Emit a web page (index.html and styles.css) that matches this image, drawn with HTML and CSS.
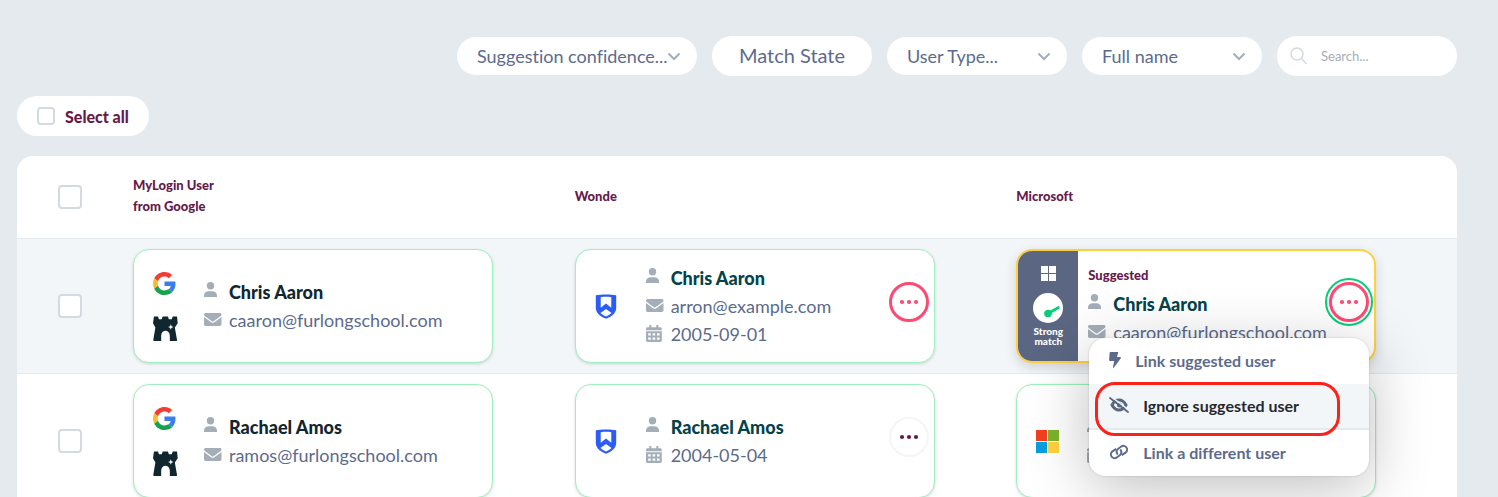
FILE: index.html
```html
<!DOCTYPE html>
<html lang="en">

<head>
    <meta charset="UTF-8">
    <title>Match users</title>
    <link rel="stylesheet" href="styles.css">
</head>

<body>
    <!-- shared icons -->
    <svg class="sprite" aria-hidden="true">
        <symbol id="chevron" viewBox="0 0 14 9"><path d="M1.500 1.500 7 7l5.500-5.500" fill="none" stroke="currentColor" stroke-width="2"/></symbol>
        <symbol id="user" viewBox="0 0 18 20"><circle cx="6.500" cy="3.700" r="3.700"/><path d="M0 15v-1.300C0 10.800 2 9.200 4.600 9.200h3.800c2.600 0 4.600 1.600 4.600 4.500V15z"/></symbol>
        <symbol id="mail" viewBox="0 0 18 20"><path d="M1.700 3h14.100c1 0 1.700.7 1.700 1.600 0 .6-.3 1-.7 1.300l-7.300 5.400c-.5.400-1.100.4-1.600 0L.7 5.900C.3 5.600 0 5.200 0 4.600 0 3.700.7 3 1.700 3z"/><path d="M0 7l7.100 5.300c1 .7 2.300.7 3.300 0L17.500 7v7.300c0 1-.8 1.700-1.700 1.700H1.700c-1 0-1.700-.7-1.700-1.700z"/></symbol>
        <symbol id="calendar" viewBox="0 0 18 20"><path d="M3.300 1h2v2.200h5V1h2v2.200h1.900c.9 0 1.600.7 1.600 1.500v1.500H0V4.700c0-.8.700-1.500 1.600-1.500h1.700z"/><path fill-rule="evenodd" d="M0 7.300h15.800v9c0 1-.7 1.700-1.600 1.700H1.600C.7 18 0 17.300 0 16.300zm2.200 1.900v2.300h2.600V9.200zm4.400 0v2.300h2.600V9.200zm4.400 0v2.300h2.600V9.200zM2.200 13.500v2.300h2.600v-2.300zm4.400 0v2.300h2.600v-2.300zm4.400 0v2.300h2.600v-2.300z"/></symbol>
        <symbol id="google" viewBox="0 0 48 48">
            <path fill="#f33d34" d="M24 9.500c3.540 0 6.710 1.220 9.210 3.600l6.850-6.850C35.900 2.380 30.470 0 24 0 14.620 0 6.510 5.380 2.560 13.220l7.980 6.190C12.430 13.720 17.740 9.500 24 9.500z"/>
            <path fill="#3b7ded" d="M46.980 24.550c0-1.570-.15-3.090-.38-4.550H24v9.020h12.940c-.58 2.960-2.260 5.480-4.780 7.180l7.730 6c4.510-4.180 7.090-10.360 7.090-17.650z"/>
            <path fill="#fbb92c" d="M10.530 28.590c-.48-1.450-.76-2.990-.76-4.590s.27-3.140.76-4.590l-7.980-6.190C.92 16.460 0 20.120 0 24c0 3.880.92 7.540 2.560 10.780l7.970-6.190z"/>
            <path fill="#16a34f" d="M24 48c6.480 0 11.930-2.130 15.890-5.810l-7.730-6c-2.150 1.450-4.920 2.300-8.160 2.300-6.260 0-11.570-4.220-13.470-9.910l-7.980 6.190C6.510 42.620 14.620 48 24 48z"/>
        </symbol>
        <symbol id="castle" viewBox="0 0 26 26">
            <path fill="#10272f" d="M1 .5h4.200l1 3h3L10 .5h5.500l1 3h3l1-3H25l.7 7-3 4.500L25 25c0 .6-.3 1-1 1h-6.500v-5.500c0-7-9-7-9 0V26H1.300c-.8 0-1.200-.4-1-1.200L2.500 12 0 7.500z"/>
            <path fill="#fff" d="M18.500 8.500l.8 2.100 2.100.8-2.100.8-.8 2.100-.8-2.100-2.100-.8 2.100-.8z"/>
        </symbol>
        <symbol id="shield" viewBox="0 0 22 26">
            <path fill="#2b5cf6" d="M11 .4c4 0 7.500.3 10.600 1V14c0 5.600-4 9-10.600 11.700C4.400 23 .4 19.600.4 14V1.400C3.500.7 7 .4 11 .4z"/>
            <path fill="#fff" d="M5.500 3.300c3.700-.6 7.300-.6 11 0v11L11 10l-5.500 4.300zM11 15.500l5.800 4.200C15 21.400 13.200 22.400 11 23.300c-2.200-.9-4-1.900-5.800-3.600z"/>
        </symbol>
        <symbol id="eye-off" viewBox="0 0 20 16">
            <path fill="none" stroke="currentColor" stroke-width="3" d="M3 8c2-3.700 4.200-5 7-5s5 1.300 7 5c-2 3.700-4.200 5-7 5S5 11.700 3 8z"/>
            <circle cx="10.500" cy="8" r="2.500"/>
            <path stroke="#f3f6f9" stroke-width="1.500" d="M2.500 0l18 13.500"/>
            <path stroke="currentColor" stroke-width="1.800" stroke-linecap="round" d="M1 1l18 14"/>
        </symbol>
        <symbol id="link" viewBox="0 0 20 16">
            <g fill="none" stroke="currentColor" stroke-width="2">
                <path d="M7.200 4.900 3.500 7.400a3.700 3.700 0 0 0 4.200 6.100l3.100-2.200a3.700 3.700 0 0 0 .9-5.200l-.5-.6"/>
                <path d="M12.800 11.100l3.700-2.500a3.700 3.700 0 0 0-4.200-6.100L9.200 4.700a3.700 3.700 0 0 0-.9 5.200l.5.600"/>
            </g>
        </symbol>
        <symbol id="dots" viewBox="0 0 20 6"><circle cx="3" cy="3" r="2.100"/><circle cx="10" cy="3" r="2.100"/><circle cx="17" cy="3" r="2.100"/></symbol>
    </svg>

    <div class="page">
        <form class="filters">
            <div class="select wide">
                <select aria-label="Suggestion confidence"><option>Suggestion confidence...</option></select>
                <svg><use href="#chevron"/></svg>
            </div>
            <button type="button" class="match-state">Match State</button>
            <div class="select">
                <select aria-label="User type"><option>User Type...</option></select>
                <svg><use href="#chevron"/></svg>
            </div>
            <div class="select">
                <select aria-label="Sort by"><option>Full name</option></select>
                <svg><use href="#chevron"/></svg>
            </div>
            <div class="search">
                <svg viewBox="0 0 18 18"><circle cx="7" cy="7" r="6" fill="none" stroke="#d3dae2" stroke-width="1.500"/><path d="M11.500 11.500l5 5.500" stroke="#d3dae2" stroke-width="1.500"/></svg>
                <input type="text" placeholder="Search..." aria-label="Search">
            </div>
        </form>

        <label class="select-all"><input type="checkbox"> Select all</label>

        <table class="users">
            <thead>
                <tr>
                    <th class="check"><input type="checkbox" aria-label="Select all rows"></th>
                    <th>MyLogin User<br>from Google</th>
                    <th>Wonde</th>
                    <th>Microsoft</th>
                </tr>
            </thead>
            <tbody>
                <tr class="current">
                    <td class="check"><input type="checkbox" aria-label="Select Chris Aaron"></td>
                    <td>
                        <div class="card">
                            <div class="source">
                                <svg class="google"><use href="#google"/></svg>
                                <svg class="castle"><use href="#castle"/></svg>
                            </div>
                            <ul class="details main">
                                <li class="name"><svg><use href="#user"/></svg>Chris Aaron</li>
                                <li><svg><use href="#mail"/></svg>caaron@furlongschool.com</li>
                            </ul>
                        </div>
                    </td>
                    <td>
                        <div class="card">
                            <div class="source"><svg class="shield"><use href="#shield"/></svg></div>
                            <ul class="details">
                                <li class="name"><svg><use href="#user"/></svg>Chris Aaron</li>
                                <li><svg><use href="#mail"/></svg>arron@example.com</li>
                                <li><svg><use href="#calendar"/></svg>2005-09-01</li>
                            </ul>
                            <button type="button" class="more pink" aria-label="More"><svg><use href="#dots"/></svg></button>
                        </div>
                    </td>
                    <td>
                        <div class="card suggested">
                            <div class="strength">
                                <svg class="windows" viewBox="0 0 15 15"><path fill="#fff" d="M0 0h7v7H0zM8 0h7v7H8zM0 8h7v7H0zM8 8h7v7H8z"/></svg>
                                <svg class="dial" viewBox="0 0 30 30"><circle cx="15" cy="15" r="15" fill="#fff"/><circle cx="15" cy="20.500" r="3.800" fill="#05ce78"/><path d="M15 20.500l10.500-6" stroke="#05ce78" stroke-width="2.600" stroke-linecap="round"/></svg>
                                <span>Strong match</span>
                            </div>
                            <div>
                                <div class="tag">Suggested</div>
                                <ul class="details">
                                    <li class="name"><svg><use href="#user"/></svg>Chris Aaron</li>
                                    <li><svg><use href="#mail"/></svg>caaron@furlongschool.com</li>
                                </ul>
                            </div>
                            <button type="button" class="more pink open" aria-label="More"><svg><use href="#dots"/></svg></button>
                            <div class="menu">
                                <button type="button"><svg class="bolt" viewBox="0 0 12 16"><path d="M1.500 0h7.800L8 5h3.200c.7 0 1 .7.6 1.200L5 15.500c-.4.700-1.200.4-1-.4L5.200 9H1C.4 9 0 8.600.1 8L.6.800C.7.300 1 0 1.500 0z"/></svg>Link suggested user</button>
                                <button type="button" class="active"><svg><use href="#eye-off"/></svg>Ignore suggested user</button>
                                <button type="button"><svg><use href="#link"/></svg>Link a different user</button>
                            </div>
                        </div>
                    </td>
                </tr>
                <tr>
                    <td class="check"><input type="checkbox" aria-label="Select Rachael Amos"></td>
                    <td>
                        <div class="card">
                            <div class="source">
                                <svg class="google"><use href="#google"/></svg>
                                <svg class="castle"><use href="#castle"/></svg>
                            </div>
                            <ul class="details main">
                                <li class="name"><svg><use href="#user"/></svg>Rachael Amos</li>
                                <li><svg><use href="#mail"/></svg>ramos@furlongschool.com</li>
                            </ul>
                        </div>
                    </td>
                    <td>
                        <div class="card">
                            <div class="source"><svg class="shield"><use href="#shield"/></svg></div>
                            <ul class="details">
                                <li class="name"><svg><use href="#user"/></svg>Rachael Amos</li>
                                <li><svg><use href="#calendar"/></svg>2004-05-04</li>
                            </ul>
                            <button type="button" class="more" aria-label="More"><svg><use href="#dots"/></svg></button>
                        </div>
                    </td>
                    <td>
                        <div class="card">
                            <div class="source">
                                <svg class="microsoft" viewBox="0 0 23 23"><path fill="#f1401f" d="M0 0h11v11H0z"/><path fill="#7cb32b" d="M12 0h11v11H12z"/><path fill="#049fe0" d="M0 12h11v11H0z"/><path fill="#ffd23f" d="M12 12h11v11H12z"/></svg>
                            </div>
                            <ul class="details">
                                <li class="name"><svg><use href="#user"/></svg></li>
                                <li><svg><use href="#calendar"/></svg></li>
                            </ul>
                        </div>
                    </td>
                </tr>
            </tbody>
        </table>
    </div>
</body>

</html>
```

FILE: styles.css
```css
*,
*::after {
    box-sizing: border-box;
}

body {
    margin: 0;
    background: #e5eaee;
    color: #5c6b8c;
    font-family: Lato, "Liberation Sans", sans-serif;
    font-size: 18px;
    font-variant-ligatures: none;
}

button,
input,
select {
    font: inherit;
    font-variant-ligatures: none;
    color: inherit;
    margin: 0;
}

button {
    border: 0;
    padding: 0;
    background: none;
    cursor: pointer;
}

svg {
    display: block;
    flex: none;
    fill: currentColor;
}

.sprite {
    position: absolute;
    width: 0;
    height: 0;
}

.page {
    padding: 36px 41px 0 17px;
}

/* filters */
.filters {
    display: flex;
    justify-content: flex-end;
    align-items: center;
    gap: 15px;
}

.select {
    position: relative;
    width: 180px;
}

.select.wide {
    width: 240px;
}

.select select {
    display: block;
    width: 100%;
    height: 38px;
    padding: 0 20px;
    border: 0;
    border-radius: 19px;
    background: #fff;
    -webkit-appearance: none;
    appearance: none;
}

.select svg {
    position: absolute;
    top: 15px;
    right: 16px;
    width: 14px;
    height: 9px;
    color: #a3aeb8;
    pointer-events: none;
}

.match-state {
    width: 160px;
    height: 40px;
    padding-bottom: 2px;
    border-radius: 20px;
    background: #fff;
    font-size: 20px;
}

.search {
    display: flex;
    align-items: center;
    gap: 13px;
    width: 180px;
    height: 40px;
    padding: 0 13px;
    border-radius: 20px;
    background: #fff;
}

.search svg {
    width: 18px;
    height: 18px;
}

.search input {
    width: 100%;
    border: 0;
    padding: 0;
    outline: 0;
    background: none;
    font-size: 13px;
}

.search input::placeholder {
    color: #a3aeb8;
}

/* check boxes */
input[type="checkbox"] {
    display: block;
    width: 24px;
    height: 24px;
    border: 2px solid #d3dae2;
    border-radius: 4px;
    background: #fff;
    -webkit-appearance: none;
    appearance: none;
}

.select-all {
    display: inline-flex;
    align-items: center;
    gap: 10px;
    height: 40px;
    margin: 20px 0;
    padding: 0 20px;
    border-radius: 20px;
    background: #fff;
    color: #651a4b;
    font-size: 16px;
    font-weight: 900;
}

.select-all input[type="checkbox"] {
    width: 18px;
    height: 18px;
}

/* table */
.users {
    width: 100%;
    table-layout: fixed;
    border-spacing: 0;
    border-radius: 16px 16px 0 0;
    background: #fff;
}

.users th {
    height: 82px;
    padding: 0 1px 2px;
    color: #651a4b;
    font-size: 13px;
    font-weight: 900;
    line-height: 21px;
    text-align: left;
}

.users td {
    padding: 10px 1px;
    border-top: 1px solid #e5eaee;
}

.users .check {
    width: 115px;
    padding-bottom: 0;
    padding-top: 0;
    padding-left: 41px;
}

.current td {
    background: #f3f6f9;
}

/* user cards */
.card {
    display: flex;
    align-items: center;
    position: relative;
    max-width: 360px;
    height: 114px;
    padding: 0 5px 0 19px;
    border: 1px solid #9df0bf;
    border-radius: 16px;
    background: #fff;
    box-shadow: 0 1px 3px rgba(0, 0, 0, .15);
}

.source {
    display: flex;
    flex-direction: column;
    gap: 21px;
    width: 51px;
}

.google {
    width: 23px;
    height: 23px;
}

.castle {
    width: 25px;
    height: 25px;
}

.shield {
    width: 22px;
    height: 25px;
}

.microsoft {
    width: 23px;
    height: 23px;
}

.details {
    margin: 0;
    padding: 0;
    list-style: none;
}

.details li {
    display: flex;
    align-items: center;
    gap: 7px;
    height: 28px;
}

.details svg {
    width: 18px;
    height: 20px;
    color: #a3aeb8;
}

.details .name {
    color: #03434a;
    font-weight: 900;
}

.details.main .name {
    color: #10272f;
}

.more {
    display: flex;
    align-items: center;
    justify-content: center;
    width: 40px;
    height: 40px;
    margin: 0 0 8px auto;
    border: 2px solid #f3f5f8;
    border-radius: 50%;
    background: #fff;
    color: #651a4b;
}

.more svg {
    width: 20px;
    height: 6px;
}

.pink {
    border: 3px solid #fd4a73;
    color: #fd4a73;
}

.open {
    outline: 2px solid #05ce78;
    outline-offset: 2px;
}

/* suggested match */
.suggested {
    padding-left: 0;
    border: 2px solid #ffd03d;
    box-shadow: 0 4px 12px rgba(0, 0, 0, .15);
}

.strength {
    display: flex;
    flex-direction: column;
    align-items: center;
    justify-content: center;
    width: 60px;
    height: 100%;
    margin-right: 10px;
    border-radius: 14px 0 0 14px;
    background: #5b6782;
    color: #fff;
    font-size: 10px;
    font-weight: 900;
    line-height: 10px;
    text-align: center;
}

.strength span {
    width: 40px;
}

.windows {
    width: 15px;
    height: 15px;
}

.dial {
    width: 30px;
    height: 30px;
    margin: 12px 0 3px;
}

.tag {
    margin-bottom: 6px;
    color: #651a4b;
    font-size: 13px;
    font-weight: 900;
    line-height: 18px;
}

.suggested .more {
    margin-right: 0;
}

/* action menu */
.menu {
    position: absolute;
    z-index: 1;
    top: 87px;
    left: 71px;
    width: 280px;
    border-radius: 16px;
    background: #fff;
    box-shadow: 0 0 2px rgba(0, 0, 0, .2), 0 12px 60px rgba(0, 0, 0, .25);
}

.menu button {
    display: flex;
    align-items: center;
    gap: 14px;
    position: relative;
    width: 100%;
    height: 46px;
    padding: 0 20px 2px;
    font-size: 16px;
    font-weight: bold;
}

.menu svg {
    width: 20px;
    height: 16px;
}

.menu .bolt {
    width: 12px;
}

.menu .active {
    border-bottom: 2px solid #e5eaee;
    background: #f3f6f9;
    color: #26282e;
}

.menu .active svg {
    color: #5b6782;
}

.menu .active::after {
    content: "";
    position: absolute;
    top: -2px;
    left: 6px;
    width: 245px;
    height: 54px;
    border: 3px solid #fc2119;
    border-radius: 20px;
}
```
